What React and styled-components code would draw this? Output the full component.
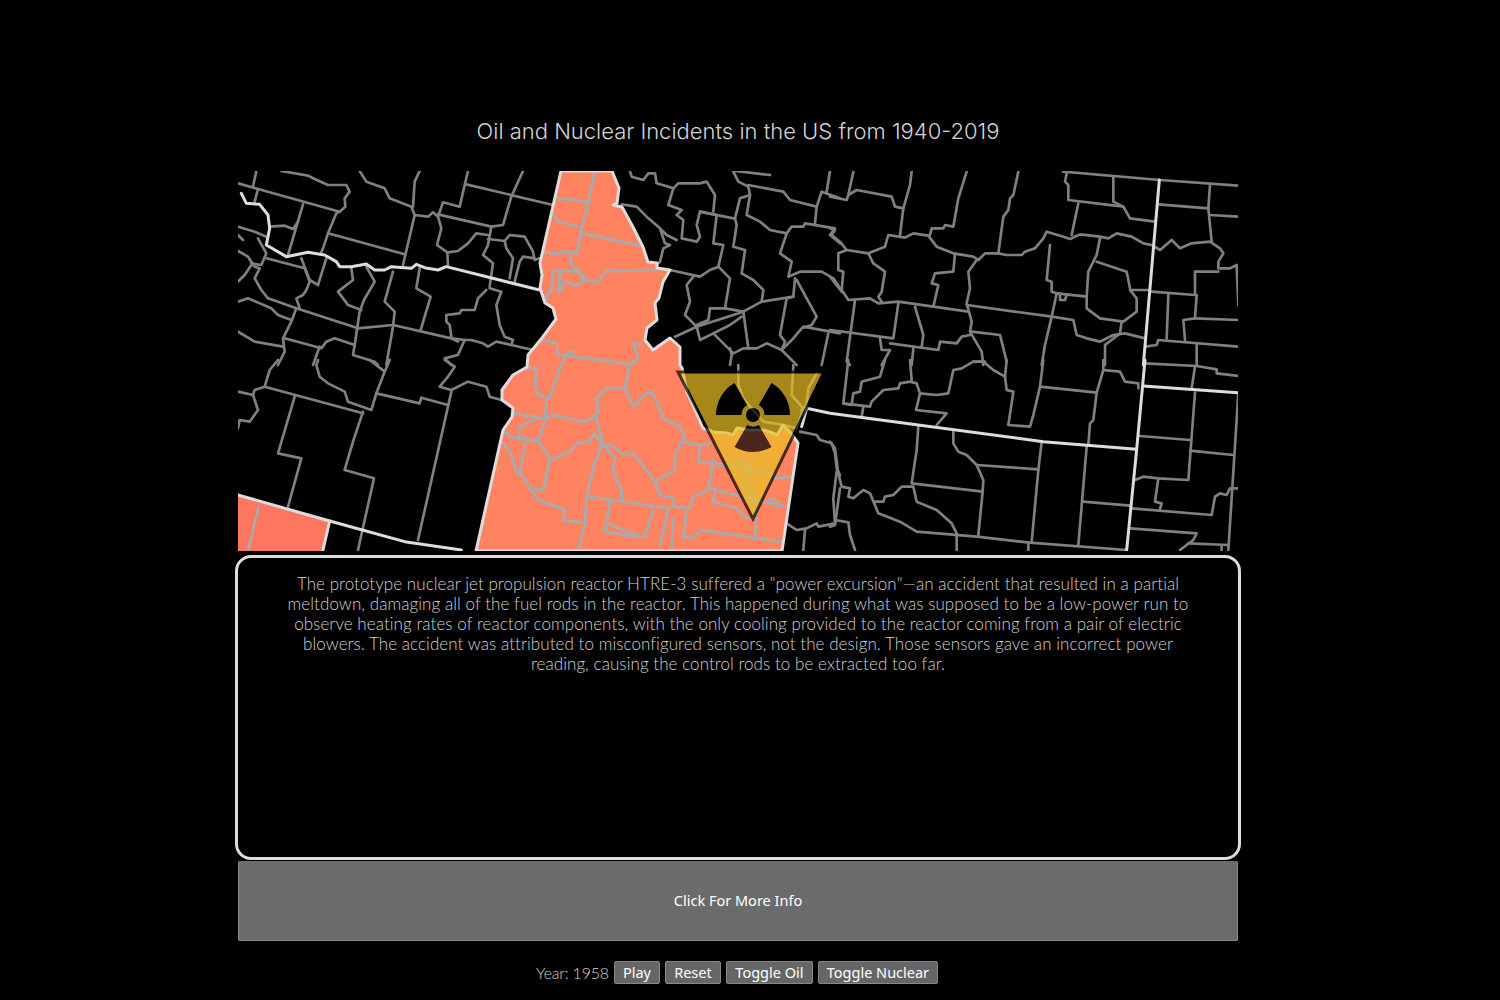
import React from "react";
import styled, { createGlobalStyle } from "styled-components";

const GlobalStyle = createGlobalStyle`
  html, body {
    margin: 0;
    background: #000;
  }
`;

const Page = styled.div`
  display: flex;
  flex-direction: column;
  align-items: center;
  width: 1476px;
  padding-top: 118px;
  height: 882px;
  overflow: hidden;
  background: #000;
`;

const Title = styled.h1`
  margin: 0 0 27px;
  font-family: Inter, "Liberation Sans", sans-serif;
  font-weight: 300;
  font-size: 22px;
  line-height: 26px;
  color: #d4d4d4;
`;

const MapSvg = styled.svg`
  display: block;
  width: 1000px;
  height: 380px;
  background: #000;
`;

const Lines = styled.polyline`
  fill: none;
  stroke: ${(p) => p.$color};
  stroke-width: ${(p) => p.$width};
  stroke-linejoin: round;
  stroke-linecap: round;
`;

const InfoBox = styled.div`
  box-sizing: border-box;
  width: 1006px;
  height: 305px;
  margin-top: 4px;
  padding: 16px 20px 0;
  border: 3px solid #ddd;
  border-radius: 16px;
  background: #000;
`;

const InfoText = styled.p`
  margin: 0;
  font-family: Lato, "Liberation Sans", sans-serif;
  font-weight: 300;
  font-size: 17px;
  line-height: 20px;
  letter-spacing: 0.06px;
  text-align: center;
  color: #d0d0d0;
`;

const MoreButton = styled.button`
  display: block;
  box-sizing: border-box;
  width: 1000px;
  height: 80px;
  margin-top: 1px;
  padding: 0 0 2px;
  border: 1px solid #888;
  border-top: 0;
  border-radius: 2px;
  background: #6b6b6b;
  color: #fff;
  font-family: "Noto Sans", "Liberation Sans", sans-serif;
  font-size: 14.5px;
`;

const Controls = styled.div`
  display: flex;
  align-items: center;
  gap: 5px;
  margin-top: 20px;
  margin-right: 2px;
`;

const Year = styled.span`
  font-family: Lato, "Liberation Sans", sans-serif;
  font-weight: 300;
  font-size: 16px;
  letter-spacing: -0.2px;
  color: #d0d0d0;
`;

const ControlButton = styled.button`
  box-sizing: border-box;
  height: 23px;
  width: ${(p) => p.$width}px;
  padding: 0 0 2px;
  border: 1px solid #888;
  border-radius: 2px;
  background: #666;
  color: #fff;
  font-family: "Noto Sans", "Liberation Sans", sans-serif;
  font-size: 14.5px;
  line-height: 20px;
`;

// Traced county lines, one group per area of the map. Points are in 3x units from the area's corner.
const outerCounties = [
  {
    x: 238,
    y: 165,
    lines: [
      "55,18 45,65", "0,55 60,72 305,140", "60,72 50,110", "195,118 150,270",
      "130,18 210,32 230,42 270,60 325,60 335,80 320,100 322,125 305,140 295,145 270,205 255,250 250,262",
      "270,205 500,268",
      "365,18 385,50 440,70 455,100 520,125 530,150 570,155 585,142 600,155 610,190 597,240 628,262 630,300",
      "530,150 495,300", "545,18 530,50 525,125", "690,18 665,125 615,112 600,155",
      "600,148 760,185 795,180 820,95 855,18", "685,58 945,120",
      "760,185 750,240 735,270 765,295 755,365", "630,262 660,258 690,235 715,205 750,210",
      "750,222 800,228 815,210 860,215 885,260 890,285 905,280",
      "800,228 805,250 825,280 815,340", "890,280 855,275 845,290 830,350",
      "0,185 50,200 85,215", "95,185 140,182 165,192 180,170",
      "0,258 30,275 50,305 65,310 50,340 70,375 90,400 175,430 360,490 465,480 640,520 660,530",
      "85,280 200,310 215,350 205,375 195,390 175,400 185,430",
      "190,280 215,345 240,360 265,280", "0,410 30,400 100,430 120,450 160,465",
      "175,430 160,470 135,520 140,560 120,600",
      "140,520 250,550 265,530 290,520 350,540 365,440 378,405 410,350 385,305",
      "340,310 345,345 300,380 330,420 370,435", "350,540 345,570 410,590 420,600",
      "0,500 50,530 135,545", "245,545 225,600",
      "465,320 440,410 470,440 465,485 445,600", "545,310 535,370 578,395 548,495",
      "755,370 790,380 775,420 785,480 800,515 825,525 820,540 885,555",
      "640,515 635,480 625,470 625,450 665,445 670,435 710,435 720,400 745,375",
      "640,520 680,525 700,525 735,535 750,545 775,530 820,540",
      "680,525 660,570 620,580 640,600", "40,300 20,330 0,350",
      "0,210 15,225", "60,220 85,265 70,300 40,295",
    ],
  },
  {
    x: 238,
    y: 360,
    lines: [
      "120,0 95,30 80,80 50,90 45,105 60,150 35,185 5,180 0,205", "0,95 45,105",
      "80,80 375,160", "170,110 120,280 190,295 150,440",
      "240,0 235,15 245,50 270,70 320,95 330,125 400,150 415,100 545,130 550,113 630,135",
      "395,0 440,35", "455,0 440,35 415,100", "620,0 650,20 630,50 605,80 640,90",
      "640,90 690,65 745,80 755,110 790,120", "640,95 540,540",
      "375,155 345,245 320,330 408,355 360,570",
    ],
  },
  {
    x: 500,
    y: 165,
    lines: [
      "390,20 395,35 430,45 445,25 465,25 470,55 520,70 505,120 545,135 530,150 550,165 545,220 590,230 600,215 590,180 600,140 700,160",
      "520,70 535,55 600,55 620,50 645,90 640,140", "600,140 650,150 640,235 670,240 655,305",
      "365,118 410,125 445,160 480,190 500,210 530,225", "480,190 495,235 510,240 490,250 480,290 470,300",
      "510,315 600,335 630,315 655,305 690,340 675,430 730,440",
      "700,20 715,50 745,65 750,90 720,100 705,160 710,180 700,245 735,255 725,325 760,345 790,375 785,410",
      "705,18 810,30", "745,60 850,80 870,105 950,125 965,80 1020,100",
      "750,90 740,150 780,170 810,195 860,205 840,265 875,290 865,335 900,320 965,320 1000,340 1020,370",
      "860,205 875,185 910,185 915,175 1005,190 990,210 1020,235", "950,125 945,175", "990,18 980,80",
      "885,340 880,395 785,410 730,440 590,485 525,515", "880,395 860,400 840,510 855,530 845,555",
      "890,345 920,400 950,455 935,480 905,490 880,520 845,555 800,535 770,550 730,550 700,565 640,505 600,525 590,485 555,450 570,410 560,360 580,335",
      "730,440 745,550", "630,430 675,430", "630,430 625,465 590,480", "640,505 690,480 725,455",
      "910,485 1020,505", "985,505 965,600", "690,550 695,570 690,600", "845,555 880,590 890,600",
    ],
  },
  {
    x: 470,
    y: 355,
    lines: [
      "990,230 1040,240 1050,255 1085,265 1095,295 1100,340 1110,360",
      "1100,350 1090,430 1095,505 1045,515 1040,505 1010,520 980,525 950,505",
      "1005,525 1000,585",
    ],
  },
  {
    x: 830,
    y: 165,
    lines: [
      "0,95 50,105 55,90 70,20", "55,90 80,75 185,95 195,125 220,130 240,60 245,20", "220,130 210,210",
      "0,190 15,195 5,210 30,230 50,255 115,265 165,245 175,210 225,218 250,205 295,212 320,245 370,265 430,275 445,285 465,265 505,265 530,270 575,270 585,260 615,250 640,220 650,200 700,215 720,222 750,208 810,215 835,220 860,205 905,215 940,235 965,240 990,255 1025,225 1050,250 1085,235 1140,230 1170,250 1180,265 1165,290 1165,310 1200,310 1220,300 1225,420",
      "50,255 25,265 25,315 40,320 35,375 55,405 120,400 145,415 205,410 415,440",
      "115,265 130,295 165,320 155,380 145,395 155,410", "0,335 35,380",
      "300,210 305,190 340,190 345,180 370,185 385,100 410,20", "375,265 370,320 315,325 305,355 325,360 310,425",
      "505,265 520,155 535,135 540,100 550,90 565,20", "440,285 415,320 420,370 410,415 425,470 420,500 455,560 460,600",
      "410,420 665,455 730,465 740,510 770,520 810,530 850,510 885,505 945,520",
      "665,455 680,385 770,395 770,430 810,460 880,470 920,440 920,400 900,375 955,375",
      "660,240 650,345 665,350 665,380 680,385", "690,385 690,405 705,405 710,390",
      "810,220 800,270 775,320 770,395", "800,290 890,320 900,370", "965,380 1095,390 1095,320 1165,320",
      "1140,60 1135,130 1145,230", "700,20 990,45 1225,62", "710,25 705,50 715,60 715,105 880,125 900,160 975,170",
      "745,115 725,210", "850,35 850,110 880,125", "985,118 1135,130", "1140,150 1225,155",
      "1100,390 1095,460 1060,465 1065,525", "1015,390 1010,520", "945,545 980,540 985,525 1225,545",
      "1095,460 1225,465", "1100,540 1100,600", "875,470 870,505 825,540 825,600",
      "665,455 645,540 635,600", "75,405 50,590 60,600", "0,495 190,520 205,415", "255,425 280,510 275,545",
      "150,520 155,555 180,555 155,600", "180,535 325,555 330,530 380,535 395,515 420,510", "250,550 245,600",
      "425,500 510,510 530,590", "430,590 465,590",
    ],
  },
  {
    x: 830,
    y: 360,
    lines: [
      "55,0 40,130 65,135 70,100 90,95 95,65 150,50 165,0", "100,140 95,170",
      "40,130 120,140 125,125 160,90 205,85 210,70 240,65 260,70 270,100 320,105 355,100 370,30 395,25 430,5 460,5 490,30 525,50 530,90 550,95 535,195 600,200 610,165 630,80 800,98 820,30 870,35 885,65 925,70 925,85",
      "240,0 245,60", "270,100 258,150 350,160 320,195", "530,0 525,50", "640,0 630,80", "820,0 820,30",
      "800,98 790,180 780,190 775,255", "265,200 260,270 245,370 458,395 445,525",
      "370,215 370,250 385,275 410,285 440,315 460,360 458,395", "440,315 625,328",
      "635,245 625,330 605,545", "770,260 745,555", "760,425 900,437",
      "0,245 15,265 25,340 35,380 60,385 55,410 70,415 100,390 120,400 145,460 210,485 260,515 440,530 600,548 890,570",
      "30,385 15,495 0,500", "15,480 55,487 60,525 75,570",
      "135,425 160,425 165,410 190,405 215,380 250,380 260,425 320,450 365,490 380,520 380,570",
      "595,550 595,570", "945,10 1100,18 1160,28 1160,40 1225,48", "1095,20 1085,85",
      "1095,98 1075,360 985,355 940,350 915,360", "930,228 1080,240", "1080,272 1210,285", "1225,100 1195,570",
      "985,355 975,425 995,430 990,447", "905,445 1145,465 1155,410 1170,400 1190,405 1200,385 1225,385",
      "900,505 1100,520 1090,540 1050,570", "1075,550 1195,555", "1175,560 1175,570",
    ],
  },
  {
    x: 670,
    y: 365,
    lines: [
      "205,0 205,60 220,100 240,125 280,170 340,180 380,190",
      "370,0 365,90 400,130 380,190",
      "440,25 415,70 410,120 395,135",
    ],
  },
];

const idahoCounties = [
  {
    x: 500,
    y: 165,
    lines: [
      "285,18 265,110 245,190 230,265", "170,100 220,105 265,110", "160,150 175,170 245,188",
      "245,205 425,243", "135,262 175,268 190,258 230,265",
      "215,265 210,295 225,310 240,320 260,345 290,352 320,318 470,315", "160,318 205,318 240,320",
      "160,318 155,375 140,390 140,405", "180,318 178,355 175,385 195,350 225,362 250,350 240,320",
      "125,525 170,535 170,570 190,570 390,598", "190,570 225,560", "390,598 415,580 400,535 420,540",
    ],
  },
  {
    x: 470,
    y: 355,
    lines: [
      "170,40 200,40 195,90 205,120 240,130 265,50 285,10", "480,30 465,100 410,100 380,130 385,170 365,190 340,200 245,180 225,195 205,260",
      "130,175 215,190", "230,130 225,190", "190,195 150,215 145,245 205,260 240,310 220,405 180,400",
      "105,230 120,245 205,260", "100,265 120,290 140,350 160,365 180,400 205,435 285,465 280,495 345,505",
      "165,265 150,350", "240,315 300,290 320,265 355,260 375,235 395,270 375,320 350,425 345,505 325,585",
      "375,180 390,230 400,270 420,270 465,300 490,295 525,340 555,380 615,345 615,300 635,260 690,270 720,265",
      "465,100 490,155 525,120 545,110 560,140 580,190 630,215 645,250 635,260",
      "400,270 435,310 430,350 455,410 455,435", "355,425 595,460", "555,380 570,420 610,430 610,455 660,460 670,425 715,405 730,315",
      "690,275 685,320 730,325 850,340", "715,400 940,455", "735,410 730,440 800,460 830,490 860,490",
      "650,470 640,545 670,550 690,525 930,560", "420,440 405,530 495,545 525,545 550,465",
      "410,505 500,540", "595,465 570,570", "610,490 605,580", "860,500 855,540", "920,370 965,365", "900,430 940,455",
      "800,320 830,320 825,345 905,355 920,370", "830,350 825,400 860,420 855,490",
    ],
  },
];

const idahoOutline =
  "561,171 612,171 619,188 617,203 613,205 622,207 633,227 643,247 648,262 657,263 657,268 670,270 663,282 659,298 655,303 657,320 647,328 645,340 653,350 670,338 680,347 680,365 682,368 687,392 693,405 703,428 713,432 727,433 733,435 737,428 748,430 763,430 770,432 777,435 783,425 790,432 798,443 782,551 476,551 503,430 512,417 513,408 502,400 502,390 513,375 527,367 528,355 542,338 556,319 553,308 545,303 540,288 542,275 540,263";

const nevadaOutline = "238,495 330,521 322,551 238,551";

const stateLines = [
  { x: 238, y: 165, points: "10,85 25,115 65,118 90,150 95,190 85,240 145,275 210,262 260,270 295,290 305,305 340,305 385,297 410,315 440,315 460,305 520,310 535,298 560,308 600,315 625,305 905,375" },
  { x: 238, y: 360, points: "0,405 275,483 500,545 670,570" },
  { x: 238, y: 360, points: "275,483 255,570" },
  { x: 830, y: 360, points: "-70,145 0,160 640,245 920,268" },
  { x: 830, y: 360, points: "-70,145 -85,200" },
  { x: 830, y: 165, points: "988,45 940,600" },
  { x: 830, y: 360, points: "945,0 920,268 890,570" },
  { x: 830, y: 360, points: "940,78 1225,98" },
];

// One blade of the trefoil, between two angles given in degrees
const blade = (from, to) => {
  const cx = 753;
  const cy = 415;
  const rOut = 37;
  const rIn = 11.5;
  const pt = (r, a) => {
    const rad = (a * Math.PI) / 180;
    return `${(cx + r * Math.cos(rad)).toFixed(1)} ${(cy - r * Math.sin(rad)).toFixed(1)}`;
  };
  return `M${pt(rIn, from)} L${pt(rOut, from)} A${rOut} ${rOut} 0 0 1 ${pt(rOut, to)} L${pt(rIn, to)} A${rIn} ${rIn} 0 0 0 ${pt(rIn, from)} Z`;
};

const CountyGroup = ({ group, color, width }) => (
  <g transform={`translate(${group.x} ${group.y}) scale(${1 / 3})`}>
    {group.lines.map((points, i) => (
      <Lines key={i} points={points} $color={color} $width={width} />
    ))}
  </g>
);

const USMap = () => (
  <MapSvg viewBox="238 171 1000 380">
    <polygon points={idahoOutline} fill="#ff8360" />
    <polygon points={nevadaOutline} fill="#ff7660" />
    {outerCounties.map((g, i) => (
      <CountyGroup key={i} group={g} color="#808080" width={8} />
    ))}
    <polyline points="259,505 248,551" fill="none" stroke="#aaa" strokeWidth="2.5" />
    {idahoCounties.map((g, i) => (
      <CountyGroup key={i} group={g} color="#aaaaaa" width={9} />
    ))}
    <polygon points={idahoOutline} fill="none" stroke="#ddd" strokeWidth="3" strokeLinejoin="round" />
    {stateLines.map((s, i) => (
      <g key={i} transform={`translate(${s.x} ${s.y}) scale(${1 / 3})`}>
        <Lines points={s.points} $color="#dddddd" $width={9} />
      </g>
    ))}
    <g opacity="0.7">
      <polygon points="678,372 824,372 753,519" fill="#ebc125" stroke="#000" strokeWidth="3" />
      <path d={blade(180, 120)} fill="#000" />
      <path d={blade(60, 0)} fill="#000" />
      <path d={blade(300, 240)} fill="#000" />
      <circle cx="753" cy="415" r="7" fill="#000" />
    </g>
  </MapSvg>
);

const App = () => (
  <Page>
    <GlobalStyle />
    <Title>Oil and Nuclear Incidents in the US from 1940-2019</Title>
    <USMap />
    <InfoBox>
      <InfoText>
        The prototype nuclear jet propulsion reactor HTRE-3 suffered a "power excursion"—an accident that resulted in a partial
        <br />
        meltdown, damaging all of the fuel rods in the reactor. This happened during what was supposed to be a low-power run to
        <br />
        observe heating rates of reactor components, with the only cooling provided to the reactor coming from a pair of electric
        <br />
        blowers. The accident was attributed to misconfigured sensors, not the design. Those sensors gave an incorrect power
        <br />
        reading, causing the control rods to be extracted too far.
      </InfoText>
    </InfoBox>
    <MoreButton>Click For More Info</MoreButton>
    <Controls>
      <Year>Year: 1958</Year>
      <ControlButton $width={46}>Play</ControlButton>
      <ControlButton $width={56}>Reset</ControlButton>
      <ControlButton $width={87}>Toggle Oil</ControlButton>
      <ControlButton $width={120}>Toggle Nuclear</ControlButton>
    </Controls>
  </Page>
);

export default App;
